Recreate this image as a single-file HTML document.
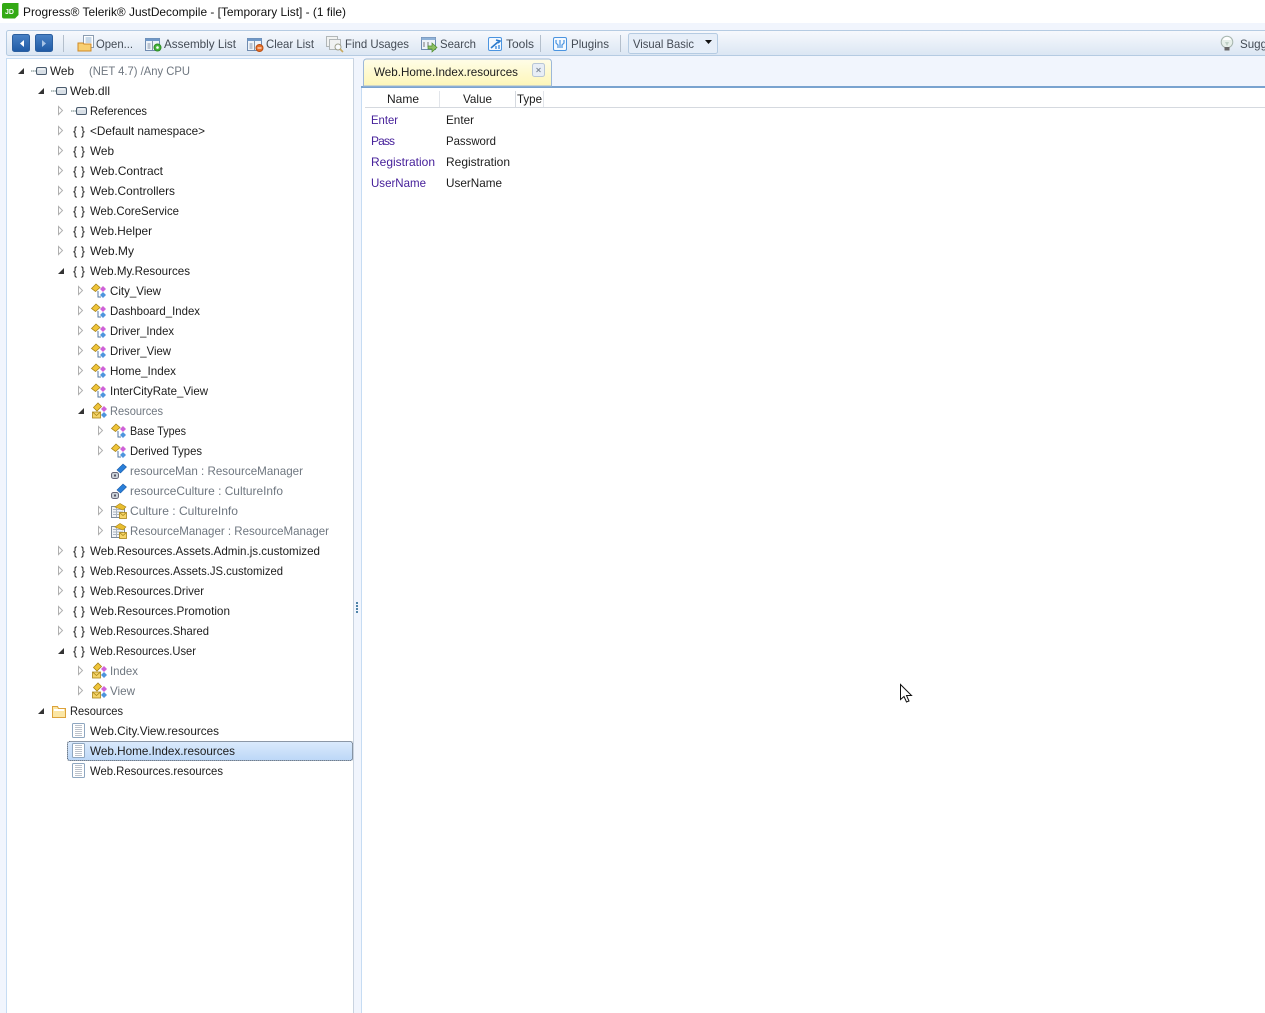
<!DOCTYPE html>
<html><head><meta charset="utf-8"><title>JustDecompile</title>
<style>
html,body{margin:0;padding:0;background:#fff;overflow:hidden}
svg{display:block}
text{font-family:"Liberation Sans",sans-serif;font-size:12px;fill:#1c1c1c}
.g{fill:#6f7780}
.t{fill:#444b55}
.p{fill:#46209a}
</style></head><body>
<svg width="1265" height="1013" viewBox="0 0 1265 1013" xmlns="http://www.w3.org/2000/svg">
<defs>
<linearGradient id="tb" x1="0" y1="0" x2="0" y2="1"><stop offset="0" stop-color="#f7f9fd"/><stop offset="1" stop-color="#dbe6f3"/></linearGradient>
<linearGradient id="nav" x1="0" y1="0" x2="0" y2="1"><stop offset="0" stop-color="#4a82c6"/><stop offset="1" stop-color="#1f5aa5"/></linearGradient>
<linearGradient id="tab" x1="0" y1="0" x2="0" y2="1"><stop offset="0" stop-color="#fffde8"/><stop offset="1" stop-color="#fdf6b8"/></linearGradient>
<linearGradient id="sel" x1="0" y1="0" x2="0" y2="1"><stop offset="0" stop-color="#dbeafc"/><stop offset="1" stop-color="#bcd7f7"/></linearGradient>
<g id="ar"><path d="M0.5 0.5L4.500 4.500L0.5 8.500Z" fill="#fff" stroke="#b0b0b0"/></g>
<g id="ad"><path d="M6 0L6 6L0 6Z" fill="#333"/></g>
<g id="asm"><path d="M0 5h5" stroke="#9aa" stroke-width="1.400" stroke-dasharray="1.500 .5"/><rect x="5.500" y="1.500" width="10" height="7" rx="1.500" fill="#d8dfe6" stroke="#4a5a6c"/><path d="M7 3h7" stroke="#fff"/></g>
<g id="ns"><text x="0" y="4" style="font-size:12px;fill:#222" textLength="12" lengthAdjust="spacingAndGlyphs">{ }</text></g>
<g id="cl"><path d="M0.500 5.500L5 1L9 4.500L4.500 8.500Z" fill="#f0c53a" stroke="#a98418" stroke-width=".8"/><path d="M12 3l3 3-3 3-3-3z" fill="#cf62d8"/><path d="M7 8v6h3" fill="none" stroke="#5a7aa0"/><path d="M12 9l3 3-3 3-3-3z" fill="#4f95dd"/></g>
<g id="cle"><path d="M1.500 4.500L6 0L9.500 3.500L5 8Z" fill="#f0c53a" stroke="#a98418" stroke-width=".8"/><path d="M12 3l3 3-3 3-3-3z" fill="#cf62d8"/><path d="M12 9l3 3-3 3-3-3z" fill="#4f95dd"/><rect x="0.500" y="9" width="8" height="6" fill="#f4d468" stroke="#a98418" stroke-width=".8"/><path d="M0.500 9l4 3.500 4-3.500" fill="none" stroke="#a98418" stroke-width=".8"/></g>
<g id="fld"><path d="M6 7l6-6 3.500 3-6 6z" fill="#2a7fd8" stroke="#1d5ca8" stroke-width=".6"/><rect x="0.500" y="9.500" width="7" height="6" rx="2" fill="#ccd2d8" stroke="#667"/><rect x="3" y="11.500" width="2" height="2" fill="#556"/></g>
<g id="prop"><rect x="0.500" y="3.500" width="13" height="11" fill="#f3f5f8" stroke="#7d8a99"/><path d="M2 6.500h10M2 9h10M2 11.500h10M5.500 4v10" stroke="#aab5c2"/><path d="M4 4l5-3.500 6 3.500-3 3z" fill="#e7bd30" stroke="#a98418" stroke-width=".6"/><rect x="8.500" y="9.500" width="7" height="6" fill="#f4d468" stroke="#a98418" stroke-width=".8"/><path d="M8.500 9.500l3.500 3 3.500-3" fill="none" stroke="#a98418" stroke-width=".8"/></g>
<g id="doc"><rect x="0.500" y="0.500" width="12" height="14" rx="1" fill="#fff" stroke="#8ea6c0"/><path d="M3 2.500h7M3 4.500h7M3 6.500h7M3 8.500h7M3 10.500h7M3 12.500h7" stroke="#bcc2cb"/></g>
</defs>

<rect width="1265" height="1013" fill="#f1f5fd"/>
<rect width="1265" height="23" fill="#fff"/>

<!-- title bar -->
<path d="M2 5a2 2 0 0 1 2-2h14.500v12l-3.500 3.500H4a2 2 0 0 1-2-2z" fill="#33a914"/>
<text x="5" y="14" style="font-size:7px;font-weight:bold;fill:#fff">JD</text>
<text x="23" y="16" textLength="323" lengthAdjust="spacingAndGlyphs" style="fill:#111">Progress® Telerik® JustDecompile - [Temporary List] - (1 file)</text>

<!-- toolbar -->
<rect x="6.500" y="30.500" width="1270" height="25" rx="2" fill="url(#tb)" stroke="#b5cbe2"/>
<rect x="12.500" y="34.500" width="17" height="17" rx="2" fill="url(#nav)" stroke="#2c5f9f"/>
<path d="M24 40v7l-4-3.500z" fill="#fff"/>
<rect x="35.500" y="34.500" width="17" height="17" rx="2" fill="url(#nav)" stroke="#2c5f9f"/>
<path d="M42 40v7l4-3.500z" fill="#a8c4e6"/>
<path d="M63.500 35v17" stroke="#b4bfcc"/>

<g transform="translate(77,35)"><rect x="6.500" y="0.500" width="10" height="12" fill="#fff" stroke="#8c9db0"/><path d="M8.500 3h6M8.500 5h6M8.500 7h6" stroke="#8fb0d0"/><path d="M1 8h5l1 1h7v7H1z" fill="#f8cf72" stroke="#d08a26"/></g>
<text x="96" y="48" textLength="37" lengthAdjust="spacingAndGlyphs" class="t">Open...</text>

<g transform="translate(145,36)"><rect x="0.500" y="2.500" width="14" height="12" fill="#eef3f9" stroke="#6f8bb0"/><rect x="0.500" y="2.500" width="14" height="2.500" fill="#6f98c8"/><path d="M7.500 5v9M2.500 8h3M2.500 10h3M2.500 12h3" stroke="#8596aa"/><circle cx="12.500" cy="11.500" r="3.500" fill="#47b53a" stroke="#2e8c26"/><circle cx="12.500" cy="11.500" r="1.300" fill="#fff"/></g>
<text x="164" y="48" textLength="72" lengthAdjust="spacingAndGlyphs" class="t">Assembly List</text>

<g transform="translate(247,36)"><rect x="0.500" y="2.500" width="14" height="12" fill="#eef3f9" stroke="#6f8bb0"/><rect x="0.500" y="2.500" width="14" height="2.500" fill="#6f98c8"/><path d="M7.500 5v9M2.500 8h3M2.500 10h3M2.500 12h3" stroke="#8596aa"/><circle cx="12.500" cy="12" r="3.500" fill="#e8702a" stroke="#b84f14"/><path d="M10.500 12h4" stroke="#fff"/></g>
<text x="266" y="48" textLength="48" lengthAdjust="spacingAndGlyphs" class="t">Clear List</text>

<g transform="translate(326,36)" opacity=".8"><rect x="0.500" y="0.500" width="11" height="10" fill="#f3f3f0" stroke="#a3a8a8"/><rect x="3.500" y="3.500" width="11" height="10" fill="#f3f3f0" stroke="#a3a8a8"/><circle cx="12" cy="11" r="3" fill="#fff" stroke="#8b8b70"/><path d="M14 13l3 3" stroke="#c29a3c" stroke-width="1.600"/></g>
<text x="345" y="48" textLength="64" lengthAdjust="spacingAndGlyphs" class="t">Find Usages</text>

<g transform="translate(421,37)"><rect x="0.500" y="0.500" width="14" height="12" fill="#eef3f9" stroke="#6f8bb0"/><rect x="0.500" y="0.500" width="14" height="2.500" fill="#8fb2d8"/><path d="M3 5v5M7 5v5" stroke="#777"/><path d="M7 9h4V6l5 4.500-5 4.500v-3H7z" fill="#8cc063" stroke="#4c8b2c" stroke-width=".7"/></g>
<text x="440" y="48" textLength="36" lengthAdjust="spacingAndGlyphs" class="t">Search</text>

<g transform="translate(488,37)"><rect x="0.500" y="0.500" width="13" height="13" rx="1.500" fill="#f4f9ff" stroke="#4b94e0"/><path d="M3 11l7-6M8 3l4 1-2 2" stroke="#2a79cc" stroke-width="1.600" fill="none"/><path d="M8 12v-3M11 12V8" stroke="#4b94e0" stroke-width="1.500"/></g>
<text x="506" y="48" textLength="28" lengthAdjust="spacingAndGlyphs" class="t">Tools</text>
<path d="M540.500 35v17" stroke="#b4bfcc"/>

<g transform="translate(553,37)"><rect x="0.500" y="0.500" width="13" height="13" rx="1.500" fill="#f4f9ff" stroke="#4b94e0"/><path d="M3 3v3l2 2v3M7 3v8M11 3v3l-2 2v3" stroke="#4b94e0" fill="none" stroke-width="1.200"/></g>
<text x="571" y="48" textLength="38" lengthAdjust="spacingAndGlyphs" class="t">Plugins</text>
<path d="M620.500 35v17" stroke="#b4bfcc"/>

<rect x="628.500" y="33.500" width="89" height="20" rx="2" fill="#e6eef8" stroke="#b5cbe2"/>
<text x="633" y="48" textLength="61" lengthAdjust="spacingAndGlyphs" class="t">Visual Basic</text>
<path d="M705 40h7l-3.500 4z" fill="#111"/>

<g transform="translate(1220,36)"><circle cx="7" cy="6" r="5.800" fill="#e6efe9" stroke="#a7b5ae"/><path d="M3 4a4 3 0 0 1 8 0z" fill="#fff"/><path d="M5 6l2 4 2-4" fill="#bfd0c6"/><rect x="4.500" y="11" width="5" height="3.500" fill="#666"/></g>
<text x="1240" y="48" textLength="27" lengthAdjust="spacingAndGlyphs" class="t">Sugg</text>

<!-- left panel -->
<rect x="6.500" y="58.500" width="347" height="960" fill="#fff" stroke="#c6dcf3"/>
<rect x="353" y="58" width="1" height="955" fill="#c9d3e0"/>
<rect x="356" y="602" width="2" height="2" fill="#4f83a8"/><rect x="356" y="605" width="2" height="2" fill="#4f83a8"/><rect x="356" y="608" width="2" height="2" fill="#4f83a8"/><rect x="356" y="611" width="2" height="2" fill="#4f83a8"/>

<!-- selection -->
<rect x="67.500" y="741.500" width="285" height="19" rx="2" fill="url(#sel)" stroke="#2a3a4e" stroke-dasharray="1 1"/>

<!-- tree -->
<use href="#ad" x="18" y="68"/><use href="#asm" x="31" y="66"/>
<text x="50" y="75" textLength="24" lengthAdjust="spacingAndGlyphs">Web</text>
<text x="89" y="75" textLength="101" lengthAdjust="spacingAndGlyphs" class="g">(NET 4.7) /Any CPU</text>

<use href="#ad" x="38" y="88"/><use href="#asm" x="51" y="86"/>
<text x="70" y="95" textLength="40" lengthAdjust="spacingAndGlyphs">Web.dll</text>

<use href="#ar" x="58" y="106"/><use href="#asm" x="71" y="106"/>
<text x="90" y="115" textLength="57" lengthAdjust="spacingAndGlyphs">References</text>

<use href="#ar" x="58" y="126"/><use href="#ns" x="73" y="131"/>
<text x="90" y="135" textLength="115" lengthAdjust="spacingAndGlyphs">&lt;Default namespace&gt;</text>
<use href="#ar" x="58" y="146"/><use href="#ns" x="73" y="151"/>
<text x="90" y="155" textLength="24" lengthAdjust="spacingAndGlyphs">Web</text>
<use href="#ar" x="58" y="166"/><use href="#ns" x="73" y="171"/>
<text x="90" y="175" textLength="73" lengthAdjust="spacingAndGlyphs">Web.Contract</text>
<use href="#ar" x="58" y="186"/><use href="#ns" x="73" y="191"/>
<text x="90" y="195" textLength="85" lengthAdjust="spacingAndGlyphs">Web.Controllers</text>
<use href="#ar" x="58" y="206"/><use href="#ns" x="73" y="211"/>
<text x="90" y="215" textLength="89" lengthAdjust="spacingAndGlyphs">Web.CoreService</text>
<use href="#ar" x="58" y="226"/><use href="#ns" x="73" y="231"/>
<text x="90" y="235" textLength="62" lengthAdjust="spacingAndGlyphs">Web.Helper</text>
<use href="#ar" x="58" y="246"/><use href="#ns" x="73" y="251"/>
<text x="90" y="255" textLength="44" lengthAdjust="spacingAndGlyphs">Web.My</text>
<use href="#ad" x="58" y="268"/><use href="#ns" x="73" y="271"/>
<text x="90" y="275" textLength="100" lengthAdjust="spacingAndGlyphs">Web.My.Resources</text>

<use href="#ar" x="78" y="286"/><use href="#cl" x="91" y="283"/>
<text x="110" y="295" textLength="51" lengthAdjust="spacingAndGlyphs">City_View</text>
<use href="#ar" x="78" y="306"/><use href="#cl" x="91" y="303"/>
<text x="110" y="315" textLength="90" lengthAdjust="spacingAndGlyphs">Dashboard_Index</text>
<use href="#ar" x="78" y="326"/><use href="#cl" x="91" y="323"/>
<text x="110" y="335" textLength="64" lengthAdjust="spacingAndGlyphs">Driver_Index</text>
<use href="#ar" x="78" y="346"/><use href="#cl" x="91" y="343"/>
<text x="110" y="355" textLength="61" lengthAdjust="spacingAndGlyphs">Driver_View</text>
<use href="#ar" x="78" y="366"/><use href="#cl" x="91" y="363"/>
<text x="110" y="375" textLength="66" lengthAdjust="spacingAndGlyphs">Home_Index</text>
<use href="#ar" x="78" y="386"/><use href="#cl" x="91" y="383"/>
<text x="110" y="395" textLength="98" lengthAdjust="spacingAndGlyphs">InterCityRate_View</text>
<use href="#ad" x="78" y="408"/><use href="#cle" x="92" y="403"/>
<text x="110" y="415" textLength="53" lengthAdjust="spacingAndGlyphs" class="g">Resources</text>

<use href="#ar" x="98" y="426"/><use href="#cl" x="111" y="423"/>
<text x="130" y="435" textLength="56" lengthAdjust="spacingAndGlyphs">Base Types</text>
<use href="#ar" x="98" y="446"/><use href="#cl" x="111" y="443"/>
<text x="130" y="455" textLength="72" lengthAdjust="spacingAndGlyphs">Derived Types</text>
<use href="#fld" x="111" y="463"/>
<text x="130" y="475" textLength="173" lengthAdjust="spacingAndGlyphs" class="g">resourceMan : ResourceManager</text>
<use href="#fld" x="111" y="483"/>
<text x="130" y="495" textLength="153" lengthAdjust="spacingAndGlyphs" class="g">resourceCulture : CultureInfo</text>
<use href="#ar" x="98" y="506"/><use href="#prop" x="111" y="503"/>
<text x="130" y="515" textLength="108" lengthAdjust="spacingAndGlyphs" class="g">Culture : CultureInfo</text>
<use href="#ar" x="98" y="526"/><use href="#prop" x="111" y="523"/>
<text x="130" y="535" textLength="199" lengthAdjust="spacingAndGlyphs" class="g">ResourceManager : ResourceManager</text>

<use href="#ar" x="58" y="546"/><use href="#ns" x="73" y="551"/>
<text x="90" y="555" textLength="230" lengthAdjust="spacingAndGlyphs">Web.Resources.Assets.Admin.js.customized</text>
<use href="#ar" x="58" y="566"/><use href="#ns" x="73" y="571"/>
<text x="90" y="575" textLength="193" lengthAdjust="spacingAndGlyphs">Web.Resources.Assets.JS.customized</text>
<use href="#ar" x="58" y="586"/><use href="#ns" x="73" y="591"/>
<text x="90" y="595" textLength="114" lengthAdjust="spacingAndGlyphs">Web.Resources.Driver</text>
<use href="#ar" x="58" y="606"/><use href="#ns" x="73" y="611"/>
<text x="90" y="615" textLength="140" lengthAdjust="spacingAndGlyphs">Web.Resources.Promotion</text>
<use href="#ar" x="58" y="626"/><use href="#ns" x="73" y="631"/>
<text x="90" y="635" textLength="119" lengthAdjust="spacingAndGlyphs">Web.Resources.Shared</text>
<use href="#ad" x="58" y="648"/><use href="#ns" x="73" y="651"/>
<text x="90" y="655" textLength="106" lengthAdjust="spacingAndGlyphs">Web.Resources.User</text>

<use href="#ar" x="78" y="666"/><use href="#cle" x="92" y="663"/>
<text x="110" y="675" textLength="28" lengthAdjust="spacingAndGlyphs" class="g">Index</text>
<use href="#ar" x="78" y="686"/><use href="#cle" x="92" y="683"/>
<text x="110" y="695" textLength="25" lengthAdjust="spacingAndGlyphs" class="g">View</text>

<use href="#ad" x="38" y="708"/>
<path d="M52.500 706.500h5l1 2h7v9h-13z" fill="#fbe6a4" stroke="#dca23a"/><rect x="54" y="709" width="10" height="2" fill="#fff"/>
<text x="70" y="715" textLength="53" lengthAdjust="spacingAndGlyphs">Resources</text>

<use href="#doc" x="72" y="723"/>
<text x="90" y="735" textLength="129" lengthAdjust="spacingAndGlyphs">Web.City.View.resources</text>
<use href="#doc" x="72" y="743"/>
<text x="90" y="755" textLength="145" lengthAdjust="spacingAndGlyphs">Web.Home.Index.resources</text>
<use href="#doc" x="72" y="763"/>
<text x="90" y="775" textLength="133" lengthAdjust="spacingAndGlyphs">Web.Resources.resources</text>

<!-- right panel -->
<rect x="361" y="88" width="904" height="925" fill="#fff"/>
<rect x="361" y="88" width="1" height="925" fill="#c6dcf3"/>
<rect x="361" y="86" width="904" height="2" fill="#7aa3cf"/>
<path d="M363.500 86V62a3 3 0 0 1 3-3h182a3 3 0 0 1 3 3v24z" fill="url(#tab)" stroke="#9db8d8"/>
<text x="374" y="76" textLength="144" lengthAdjust="spacingAndGlyphs">Web.Home.Index.resources</text>
<rect x="532.500" y="63.500" width="12" height="13" rx="2" fill="#e8eef6" stroke="#b8c6d6"/>
<path d="M536.500 68l4 4M540.500 68l-4 4" stroke="#7f8a98"/>

<!-- list header -->
<rect x="365" y="107" width="900" height="1" fill="#d5d9df"/>
<rect x="439" y="91" width="1" height="16" fill="#e2e5ea"/>
<rect x="515" y="91" width="1" height="16" fill="#d5d9df"/>
<rect x="543" y="91" width="1" height="16" fill="#e2e5ea"/>
<text x="387" y="103" textLength="32" lengthAdjust="spacingAndGlyphs">Name</text>
<text x="463" y="103" textLength="29" lengthAdjust="spacingAndGlyphs">Value</text>
<text x="517" y="103" textLength="25" lengthAdjust="spacingAndGlyphs">Type</text>

<text x="371" y="124" textLength="27" lengthAdjust="spacingAndGlyphs" class="p">Enter</text>
<text x="446" y="124" textLength="28" lengthAdjust="spacingAndGlyphs">Enter</text>
<text x="371" y="145" textLength="24" lengthAdjust="spacing" class="p">Pass</text>
<text x="446" y="145" textLength="50" lengthAdjust="spacingAndGlyphs">Password</text>
<text x="371" y="166" textLength="64" lengthAdjust="spacingAndGlyphs" class="p">Registration</text>
<text x="446" y="166" textLength="64" lengthAdjust="spacingAndGlyphs">Registration</text>
<text x="371" y="187" textLength="55" lengthAdjust="spacingAndGlyphs" class="p">UserName</text>
<text x="446" y="187" textLength="56" lengthAdjust="spacingAndGlyphs">UserName</text>

<!-- cursor -->
<path d="M900.500 684.500v15l3.500-3 2.500 5.500 2.500-1-2.500-5.500h5z" fill="#fff" stroke="#111"/>
</svg>
</body></html>
